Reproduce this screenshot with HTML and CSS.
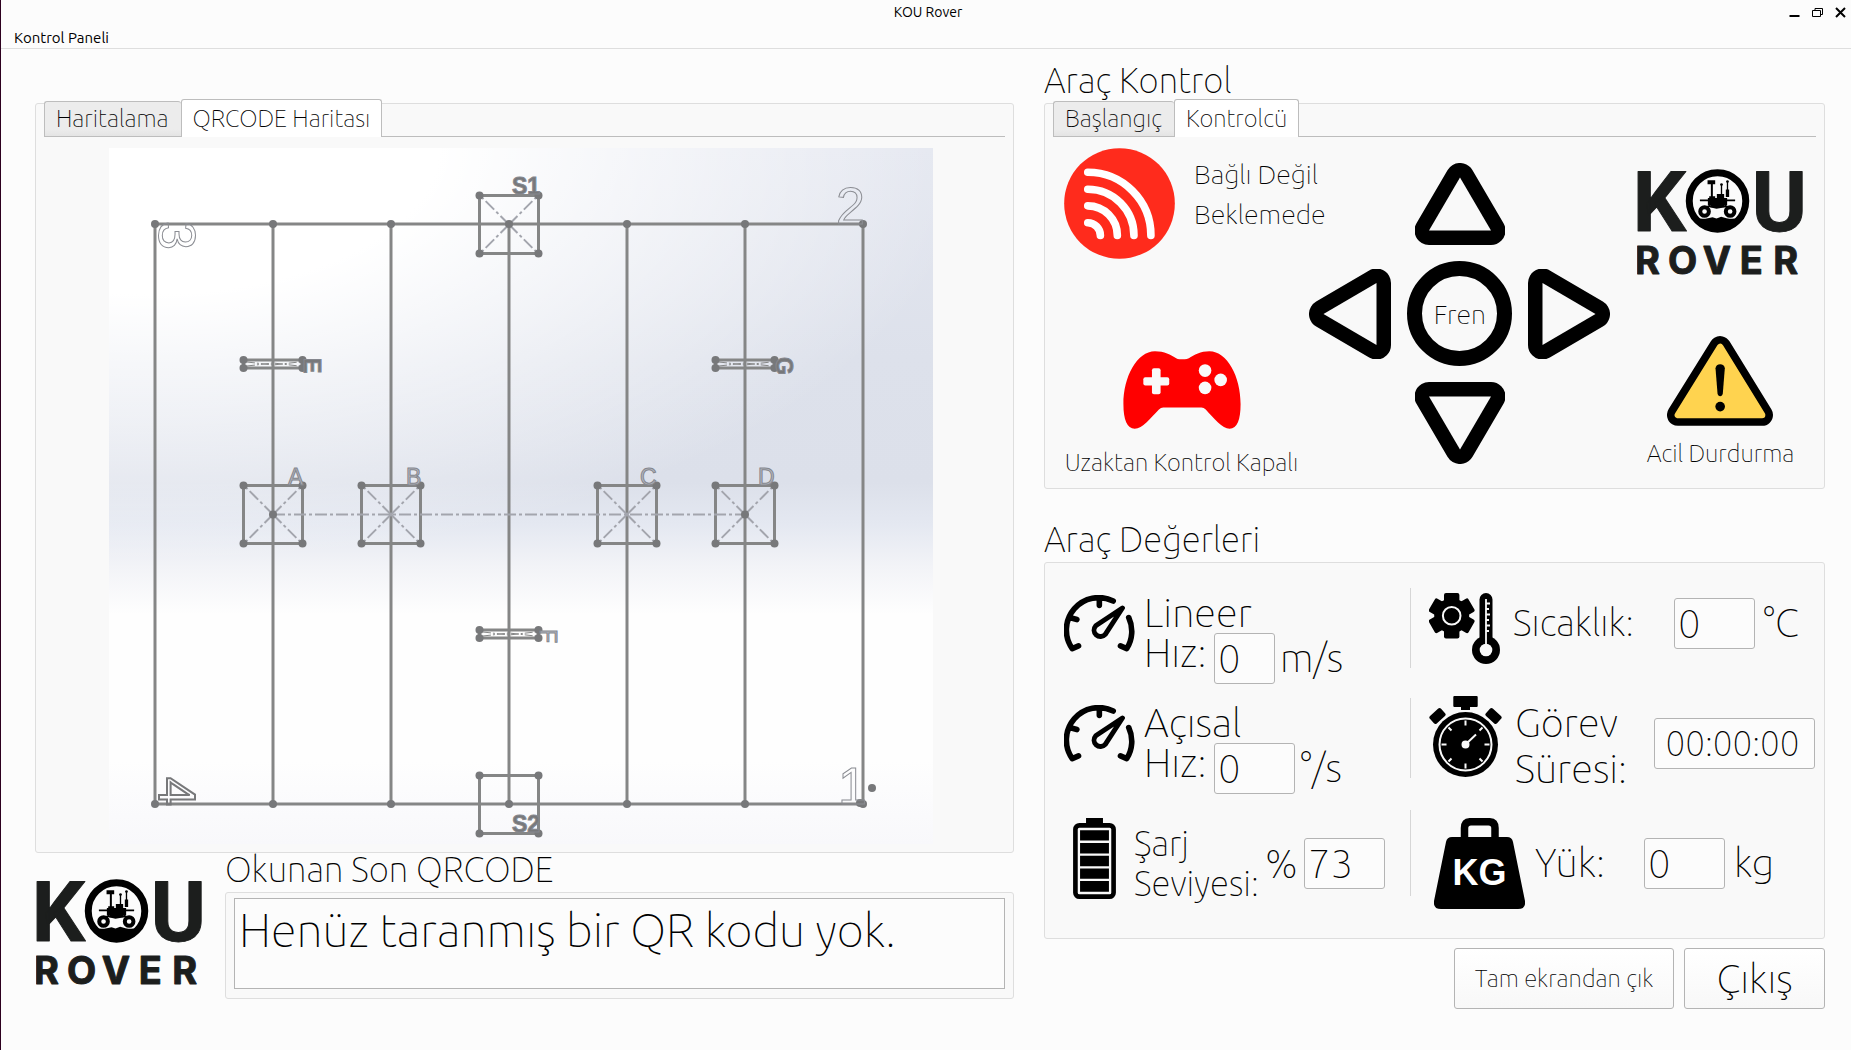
FILE: index.html
```html
<!DOCTYPE html>
<html lang="tr">
<head>
<meta charset="utf-8">
<title>KOU Rover</title>
<link rel="stylesheet" href="styles.css">
</head>
<body>
<svg class="defs" aria-hidden="true">
  <defs>
    <symbol id="logo" viewBox="50 56 500 322">
      <g class="logo-text">
        <text class="logo-big" x="36" y="245">K</text>
        <text class="logo-big" x="394" y="245">U</text>
        <text class="logo-small" y="375" x="43 142 247 358 459">ROVER</text>
      </g>
      <circle cx="291" cy="155" r="85" fill="#fbfbfb" stroke="#000" stroke-width="21"/>
      <path d="M216 196Q232 214 262 207L276 204L288 208L302 203L318 207Q350 214 366 196Q345 245 291 245Q238 245 216 196Z"/>
      <path d="M261 93h23v12h-7v36h7v9h-18v-9h5v-36h-10zM289 134h22v14h-22zM301 105h4v30h-4zM319 95h4v26h3v22h-10v-22h3zM238 151h106v5H238zM262 146h58v22h-8v6h-42v-6h-8z"/>
      <circle cx="303" cy="106" r="4"/>
      <circle cx="321" cy="97" r="4"/>
      <path d="M270 168L250 178M312 168L330 178M268 172L288 176L314 172" fill="none" stroke="#000" stroke-width="5"/>
      <circle cx="252" cy="187" r="13" fill="#fbfbfb" stroke="#000" stroke-width="12"/>
      <circle cx="329" cy="187" r="13" fill="#fbfbfb" stroke="#000" stroke-width="12"/>
    </symbol>
    <symbol id="gauge" viewBox="101 257 215 172">
      <g fill="none" stroke="#000" stroke-width="17" stroke-linecap="round" stroke-linejoin="round">
        <path d="M145 411L126 419A98 98 0 0 1 250 275M297 325A98 98 0 0 1 291 419L272 411M208 268V288M118 325L140 331"/>
        <path d="M278 296L197 350A19 19 0 1 0 226 376Z" stroke-width="15"/>
      </g>
    </symbol>
    <g id="cell">
      <path d="M-29.500 -29H29.500V29H-29.500Z"/>
    </g>
    <g id="corners" class="dots">
      <circle cx="-29.500" cy="-29" r="4"/><circle cx="29.500" cy="-29" r="4"/>
      <circle cx="-29.500" cy="29" r="4"/><circle cx="29.500" cy="29" r="4"/>
    </g>
    <g id="bar">
      <path d="M-29.500 -4H29.500V4H-29.500Z"/>
      <path d="M-26 2L0 -1L26 2M-26 -2L0 1L26 -2" stroke-width="1" stroke-dasharray="8 2 2 2"/>
      <g class="dots"><circle cx="-29.500" cy="-4" r="4"/><circle cx="29.500" cy="-4" r="4"/><circle cx="-29.500" cy="4" r="4"/><circle cx="29.500" cy="4" r="4"/></g>
    </g>
    <path id="cross" class="dash" d="M0 0L-29 -29M0 0L29 -29M0 0L-29 29M0 0L29 29"/>
  </defs>
</svg>

<div class="window">
  <header class="titlebar">
    <h1 class="title">KOU Rover</h1>
    <div class="window-buttons">
      <button type="button" class="wbtn" aria-label="Simge durumuna küçült"><svg width="11" height="11" viewBox="0 0 11 11"><path d="M0.500 8h10v2h-10z"/></svg></button>
      <button type="button" class="wbtn" aria-label="Geri yükle"><svg width="11" height="11" viewBox="0 0 11 11"><path d="M3 3V1.500H10.500V7.500H8.500M0.500 3.500H8.500V9.500H0.500Z" fill="none" stroke="#000"/></svg></button>
      <button type="button" class="wbtn" aria-label="Kapat"><svg width="11" height="11" viewBox="0 0 11 11"><path d="M1 1L10 10M10 1L1 10" stroke="#000" stroke-width="2"/></svg></button>
    </div>
  </header>
  <nav class="menubar"><button type="button" class="menu">Kontrol Paneli</button></nav>

  <main class="main">
    <section class="left">
      <div class="group">
        <div class="tabs" role="tablist">
          <button type="button" role="tab" class="tab">Haritalama</button>
          <button type="button" role="tab" class="tab active" aria-selected="true">QRCODE Haritası</button>
        </div>
        <div class="map-wrap">
          <svg class="map" viewBox="109 148 824 696" role="img" aria-label="QRCODE Haritası">
            <g class="lines">
              <path d="M155 224H863V804H155Z"/>
              <path d="M273 224V804M391 224V804M509 224V804M627 224V804M745 224V804"/>
              <use href="#cell" x="509" y="224.500"/><use href="#cell" x="509" y="804.500"/>
              <use href="#cell" x="273" y="514.500"/><use href="#cell" x="391" y="514.500"/>
              <use href="#cell" x="627" y="514.500"/><use href="#cell" x="745" y="514.500"/>
              <use href="#bar" x="273" y="364"/><use href="#bar" x="745" y="364"/><use href="#bar" x="509" y="634"/>
            </g>
            <path class="dash" d="M273 514.500H745"/>
            <use href="#cross" x="509" y="224.500"/>
            <use href="#cross" x="273" y="514.500"/><use href="#cross" x="391" y="514.500"/>
            <use href="#cross" x="627" y="514.500"/><use href="#cross" x="745" y="514.500"/>
            <use href="#corners" x="509" y="224.500"/><use href="#corners" x="509" y="804.500"/>
            <use href="#corners" x="273" y="514.500"/><use href="#corners" x="391" y="514.500"/>
            <use href="#corners" x="627" y="514.500"/><use href="#corners" x="745" y="514.500"/>
            <g class="dots">
              <circle cx="155" cy="224" r="4"/><circle cx="273" cy="224" r="4"/><circle cx="391" cy="224" r="4"/><circle cx="509" cy="224" r="4"/><circle cx="627" cy="224" r="4"/><circle cx="745" cy="224" r="4"/><circle cx="863" cy="224" r="4"/>
              <circle cx="155" cy="804" r="4"/><circle cx="273" cy="804" r="4"/><circle cx="391" cy="804" r="4"/><circle cx="509" cy="804" r="4"/><circle cx="627" cy="804" r="4"/><circle cx="745" cy="804" r="4"/><circle cx="863" cy="804" r="4"/>
              <circle cx="860" cy="803" r="4"/><circle cx="872" cy="788" r="4"/>
              <circle cx="273" cy="514.500" r="4"/><circle cx="745" cy="514.500" r="4"/>
            </g>
            <text class="num" x="836" y="224">2</text>
            <text class="num" x="838" y="804">1</text>
            <text class="num" transform="translate(159 221) rotate(90)">3</text>
            <text class="num dark" transform="translate(159 777) rotate(90)">4</text>
            <text class="mark" x="288" y="485">A</text>
            <text class="mark" x="406" y="485">B</text>
            <text class="mark" x="640" y="485">C</text>
            <text class="mark" x="758" y="485">D</text>
            <text class="mark" transform="translate(540 629) rotate(90)">F</text>
            <text class="mark bold" transform="translate(304 358) rotate(90)">E</text>
            <text class="mark bold" transform="translate(776 357) rotate(90)">G</text>
            <text class="mark bold" x="512" y="194">S1</text>
            <text class="mark bold" x="512" y="832">S2</text>
          </svg>
        </div>
      </div>
      <div class="last-code">
        <svg class="logo bottom-logo" role="img" aria-label="KOU Rover"><use href="#logo"/></svg>
        <div class="last-code-box">
          <h2 class="heading"><label for="qr">Okunan Son QRCODE</label></h2>
          <div class="group code-group">
            <textarea id="qr" class="code" readonly>Henüz taranmış bir QR kodu yok.</textarea>
          </div>
        </div>
      </div>
    </section>

    <section class="right">
      <h2 class="heading">Araç Kontrol</h2>
      <div class="group">
        <div class="tabs" role="tablist">
          <button type="button" role="tab" class="tab">Başlangıç</button>
          <button type="button" role="tab" class="tab active" aria-selected="true">Kontrolcü</button>
        </div>
        <div class="controls">
          <div class="status-col">
            <div class="status">
              <svg width="111" height="111" viewBox="102 293 333 334" aria-hidden="true">
                <circle cx="268.500" cy="460" r="166.500" fill="#ff2b1c"/>
                <path d="M173 366A190 190 0 0 1 363 556M173 417A139 139 0 0 1 312 556M173 467A89 89 0 0 1 262 556M173 518A38 38 0 0 1 211 556" fill="none" stroke="#fff" stroke-width="23" stroke-linecap="round"/>
              </svg>
              <p class="status-text">Bağlı Değil<br>Beklemede</p>
            </div>
            <button type="button" class="plain remote">
              <svg width="118" height="78" viewBox="277 902 353 235" aria-hidden="true">
                <path fill="#f00" d="M372 903C400 903 420 914 436 924Q440 927 446 927H462Q468 927 474 924C490 914 510 903 536 903C590 903 630 980 630 1062C630 1110 620 1136 597 1136C575 1136 550 1105 525 1078Q519 1072 512 1072H397Q390 1072 384 1078C357 1105 335 1136 311 1136C288 1136 277 1110 277 1062C277 980 318 903 372 903Z"/>
                <g fill="#f9f9f9"><rect x="363" y="954" width="26" height="78" rx="6"/><rect x="337" y="981" width="78" height="25" rx="6"/><circle cx="523" cy="961" r="19"/><circle cx="570" cy="989" r="19"/><circle cx="523" cy="1013" r="19"/></g>
              </svg>
              <span>Uzaktan Kontrol Kapalı</span>
            </button>
          </div>
          <div class="dpad">
            <button type="button" class="plain up" aria-label="İleri"><svg width="90" height="82" viewBox="0 0 90 82"><path class="arrow" d="M45 14.500L14 67.500H76Z"/></svg></button>
            <button type="button" class="plain west" aria-label="Sol"><svg width="82" height="90" viewBox="0 0 82 90"><path class="arrow" d="M14.500 45L67.500 14V76Z"/></svg></button>
            <button type="button" class="plain brake">Fren</button>
            <button type="button" class="plain east" aria-label="Sağ"><svg width="82" height="90" viewBox="0 0 82 90"><path class="arrow" d="M67.500 45L14.500 14V76Z"/></svg></button>
            <button type="button" class="plain down" aria-label="Geri"><svg width="90" height="82" viewBox="0 0 90 82"><path class="arrow" d="M45 67.500L14 14.500H76Z"/></svg></button>
          </div>
          <div class="stop-col">
            <svg class="logo" role="img" aria-label="KOU Rover"><use href="#logo"/></svg>
            <button type="button" class="plain stop">
              <svg width="106" height="90" viewBox="707 738 319 270" aria-hidden="true">
                <path d="M867 771L740 975H993Z" stroke="#000" stroke-width="66" stroke-linejoin="round"/>
                <path d="M867 771L740 975H993Z" fill="#ffd34f" stroke="#ffd34f" stroke-width="20" stroke-linejoin="round"/>
                <path d="M853 835C853 818 881 818 881 835L875 910C874 922 860 922 859 910Z"/><circle cx="867" cy="950" r="14.500"/>
              </svg>
              <span>Acil Durdurma</span>
            </button>
          </div>
        </div>
      </div>

      <h2 class="heading second">Araç Değerleri</h2>
      <div class="group values">
        <div class="speeds">
          <div class="speed">
            <svg class="gauge" aria-hidden="true"><use href="#gauge"/></svg>
            <label class="split" for="lin"><span class="word">Lineer</span><span>Hız:</span></label>
            <input id="lin" class="field narrow" value="0" readonly><span class="unit">m/s</span>
          </div>
          <div class="speed">
            <svg class="gauge" aria-hidden="true"><use href="#gauge"/></svg>
            <label class="split" for="ang"><span class="word">Açısal</span><span>Hız:</span></label>
            <input id="ang" class="field" value="0" readonly><span class="unit">°/s</span>
          </div>
          <div class="charge">
            <svg class="battery" width="43" height="81" viewBox="129 926 129 244" aria-hidden="true">
              <rect x="136" y="948" width="115" height="215" rx="12" fill="none" stroke="#000" stroke-width="14"/>
              <path d="M168 926h51v20h-51zM150 963h87v31h-87zM150 1001h87v32h-87zM150 1040h87v31h-87zM150 1078h87v31h-87zM150 1116h87v32h-87z"/>
            </svg>
            <label class="medium" for="bat">Şarj<br>Seviyesi:</label>
            <span class="percent">%</span>
            <input id="bat" class="field" value="73" readonly>
          </div>
        </div>
        <div class="rules"><hr><hr><hr></div>
        <div class="readings">
          <div class="reading">
            <svg width="71" height="81" viewBox="0 -10 71 81" aria-hidden="true">
              <g transform="translate(22.700 22.800)"><circle r="17.500"/><rect x="-7.700" y="-22.800" width="15.400" height="45.600" rx="2"/><rect x="-7.700" y="-22.800" width="15.400" height="45.600" rx="2" transform="rotate(60)"/><rect x="-7.700" y="-22.800" width="15.400" height="45.600" rx="2" transform="rotate(120)"/><circle r="8.800" fill="none" stroke="#f9f9f9" stroke-width="2"/></g>
              <rect x="50.500" y="0" width="13" height="60" rx="6.500"/><circle cx="57" cy="57" r="14"/>
              <circle cx="57" cy="57" r="6.300" fill="#f9f9f9"/>
              <path d="M57 6V54M57 10.500H61M57 16H60M57 21.500H61M57 27H60M57 32.500H61M57 38H60" stroke="#f9f9f9" stroke-width="1.800"/>
            </svg>
            <label class="temp" for="temp">Sıcaklık:</label>
            <input id="temp" class="field" value="0" readonly><span class="unit celsius">°C</span>
          </div>
          <div class="reading">
            <svg width="73" height="94" viewBox="0 0 73 94" aria-hidden="true">
              <rect x="24.300" y="0" width="24.400" height="11" rx="1"/><path d="M32 10h9v4h-9z"/>
              <rect x="-7.500" y="-5" width="15" height="10" rx="2" transform="translate(8.500 20) rotate(-42)"/>
              <rect x="-7.500" y="-5" width="15" height="10" rx="2" transform="translate(64.500 20) rotate(42)"/>
              <circle cx="36.500" cy="48.500" r="32.500"/>
              <g transform="translate(36.500 48.500)" stroke="#f9f9f9" fill="none" stroke-width="2"><circle r="26"/><path d="M0 -24V-19M0 24V19M-24 0H-19M24 0H19M-17 -17L-14 -14M17 -17L14 -14M-17 17L-14 14M17 17L14 14M0 0L10.500 -10"/><circle r="3" fill="#f9f9f9"/></g>
            </svg>
            <label class="tall" for="time">Görev<br>Süresi:</label>
            <input id="time" class="field time" value="00:00:00" readonly>
          </div>
          <div class="reading load">
            <svg width="91" height="91" viewBox="0 0 91 91" aria-hidden="true">
              <path d="M30.500 24V10Q30.500 3.700 37 3.700H54.500Q61 3.700 61 10V24" fill="none" stroke="#000" stroke-width="7.500"/>
              <path d="M18 19H73Q78 19 79 24L91 83Q92 91 84 91H7Q-1 91 0 83L12 24Q13 19 18 19Z"/>
              <text class="kg" x="45.500" y="67" text-anchor="middle">KG</text>
            </svg>
            <label for="load">Yük:</label>
            <input id="load" class="field" value="0" readonly><span class="unit kilo">kg</span>
          </div>
        </div>
      </div>
      <div class="actions">
        <button type="button" class="btn small">Tam ekrandan çık</button>
        <button type="button" class="btn">Çıkış</button>
      </div>
    </section>
  </main>
</div>
</body>
</html>
```
FILE: styles.css
```css
* { box-sizing: border-box; }

body {
  margin: 0;
  background: #fcfcfc;
  color: #000;
  font-family: Ubuntu, "Noto Sans", sans-serif;
  font-weight: 100;
  font-size: 24px;
}

button, input, textarea { font: inherit; color: inherit; }
svg { display: block; flex: none; }
.defs { position: absolute; width: 0; height: 0; }

.window { min-height: 100vh; border-left: 1px solid #2c001e; }

.titlebar {
  display: grid;
  grid-template-columns: 1fr auto 1fr;
  align-items: center;
  height: 24px;
  padding: 0 5px 0 9px;
}
.title { grid-column: 2; margin: 0; font-size: 14px; font-weight: 400; }
.window-buttons { display: flex; justify-content: flex-end; gap: 12px; }
.wbtn { padding: 0; border: 0; background: none; }

.menubar { height: 25px; padding: 4px 13px; border-bottom: 1px solid #dedede; }
.menu { display: block; padding: 0; border: 0; background: none; font-size: 15px; font-weight: 400; line-height: 20px; }

.main {
  display: grid;
  grid-template-columns: 979fr 781fr;
  gap: 30px;
  padding: 15px 26px 39px 34px;
}
.left { padding-top: 39px; }

.heading { margin: 0 0 7px; font-size: 35px; font-weight: 100; line-height: 32px; }
.second { margin-top: 34px; }

.group { border: 1px solid #dedede; border-radius: 3px; background: #f9f9f9; }

/* tabs */
.tabs {
  display: flex;
  align-items: flex-end;
  height: 38px;
  margin: -5px 8px 0;
  border-bottom: 1px solid #bdbdbd;
}
.tab {
  height: 35px;
  padding: 0 12px 0 11px;
  border: 1px solid #bdbdbd;
  border-bottom: 0;
  border-radius: 3px 3px 0 0;
  background: linear-gradient(#ececec 80%, #e4e4e4);
  line-height: 34px;
}
.tab:first-child { border-right: 0; }
.tab.active { height: 38px; margin-bottom: -1px; padding: 0 11px; background: #fff; }

/* map */
.map-wrap { padding: 11px 72px 8px 65px; margin: 0 8px; }
.map {
  width: 100%;
  height: auto;
  background:
    radial-gradient(100% 60% at 5% 0, #fff 35%, #fff0 100%),
    linear-gradient(#e4e7f0 0, #dde1eb 30%, #dce0ea 48%, #e4e8f1 54%, #f2f3f7 60%, #fefefe 67%, #fefefe 88%, #f8f8fb 100%);
}
.lines { fill: none; stroke: #858686; stroke-width: 3; }
.dots { fill: #77787a; stroke: none; }
.dash { fill: none; stroke: #a3a5ad; stroke-width: 2; stroke-dasharray: 12 3 3 3; }
.num {
  font: 400 52px "Liberation Sans Narrow", "Liberation Sans", sans-serif;
  fill: none;
  stroke: #8b8d93;
  stroke-width: 1;
}
.num.dark { stroke: #77787a; stroke-width: 2; }
.mark {
  font: 400 23px "Liberation Sans Narrow", "Liberation Sans", sans-serif;
  fill: #b4b7c0;
  stroke: #85878e;
  stroke-width: 1;
}
.mark.bold { font-weight: 700; fill: #77787a; }

/* logo */
.logo { width: 167px; height: 107px; }
.logo-text { font-family: Roboto, sans-serif; font-weight: 700; fill: #1c1e1d; stroke: #1c1e1d; stroke-width: 3; stroke-linejoin: round; }
.logo-big { font-size: 252px; }
.logo-small { font-family: Inter, sans-serif; font-size: 114px; }

/* last code */
.last-code { display: flex; gap: 22px; padding-left: 1px; }
.bottom-logo { margin-top: 25px; }
.last-code-box { flex: 1; }
.code-group { padding: 5px 8px 9px; }
.code {
  display: block;
  width: 100%;
  height: 91px;
  padding: 4px;
  border: 1px solid #b4b4b4;
  background: #fcfcfc;
  font-size: 47px;
  line-height: 54px;
  resize: none;
  overflow: hidden;
}

/* vehicle control */
.controls {
  display: grid;
  grid-template-columns: 245fr 327fr 167px;
  margin: 0 8px;
  padding: 11px 12px 10px 11px;
}
.plain { padding: 0; border: 0; background: none; }
.status-col { width: 235px; }
.status { display: flex; gap: 19px; }
.status-text { margin: 6px 0 0; font-size: 27px; line-height: 40px; white-space: nowrap; }
.remote, .stop { display: flex; flex-direction: column; align-items: center; width: 100%; line-height: 30px; white-space: nowrap; }
.remote { gap: 19px; margin-top: 92px; }
.stop { gap: 13px; margin-top: 61px; }
.stop-col { padding-top: 20px; }

.dpad {
  display: grid;
  grid-template-columns: 82px 105px 82px;
  grid-template-rows: 82px 105px 82px;
  gap: 16px;
  place-items: center;
  align-content: start;
  justify-content: start;
  padding-top: 15px;
}
.up, .down { grid-column: 2; }
.west { grid-column: 1; }
.arrow { fill: #f9f9f9; stroke: #000; stroke-width: 29; stroke-linejoin: round; paint-order: stroke; }
.brake { width: 105px; height: 105px; border: 15px solid #000; border-radius: 50%; font-size: 27px; }

/* vehicle values */
.values { display: grid; grid-template-columns: 365fr 1px 413fr; font-size: 40px; }
.rules { padding-top: 25px; }
.rules hr { width: 1px; height: 80px; margin: 0 0 30px; border: 0; background: #d6d6d6; }
.rules hr:last-child { height: 86px; margin: 32px 0 0; }

.field {
  width: 81px;
  height: 51px;
  padding: 0 3px;
  border: 1px solid #b4b4b4;
  border-radius: 3px;
  background: #fcfcfc;
}
.narrow { width: 61px; }
.unit { line-height: 50px; }

.speeds { padding: 30px 0 25px 19px; }
.speed {
  display: grid;
  grid-template-columns: 80px 70px auto 1fr;
  grid-template-rows: 40px 50px;
  align-items: start;
  margin-bottom: 20px;
  line-height: 40px;
}
.gauge { width: 71px; height: 57px; grid-row: 1 / 3; margin-top: 2px; }
.split { display: contents; }
.word { grid-column: 2 / 5; }
.split span:last-child { grid-column: 2; }
.speed .unit { padding-left: 5px; }

.charge { display: flex; align-items: center; height: 100px; }
.battery { margin: 0 18px 9px 9px; }
.medium { font-size: 35px; line-height: 40px; }
.percent { margin: 0 6px; }

.readings { padding: 0 9px 0 18px; }
.reading { display: flex; align-items: center; height: 120px; }
.reading label { flex: 1; padding-left: 13px; line-height: 46px; }
.reading .temp { font-size: 37px; }
.reading .tall { padding-top: 6px; }
.load { padding-left: 5px; }
.load label { padding-left: 10px; }
.time { width: 161px; padding: 0 4px 0 0; font-size: 35px; text-align: center; }
.celsius { width: 60px; padding-left: 8px; }
.kilo { width: 90px; padding-left: 9px; }
.kg { font: 700 36px "Liberation Sans", sans-serif; fill: #fff; }

/* bottom actions */
.actions { display: flex; justify-content: flex-end; gap: 10px; margin-top: 9px; }
.btn {
  width: 141px;
  height: 61px;
  border: 1px solid #b4b4b4;
  border-radius: 3px;
  background: linear-gradient(#fff, #f8f8f8);
  font-size: 40px;
}
.btn.small { width: 220px; font-size: 24px; }
```
